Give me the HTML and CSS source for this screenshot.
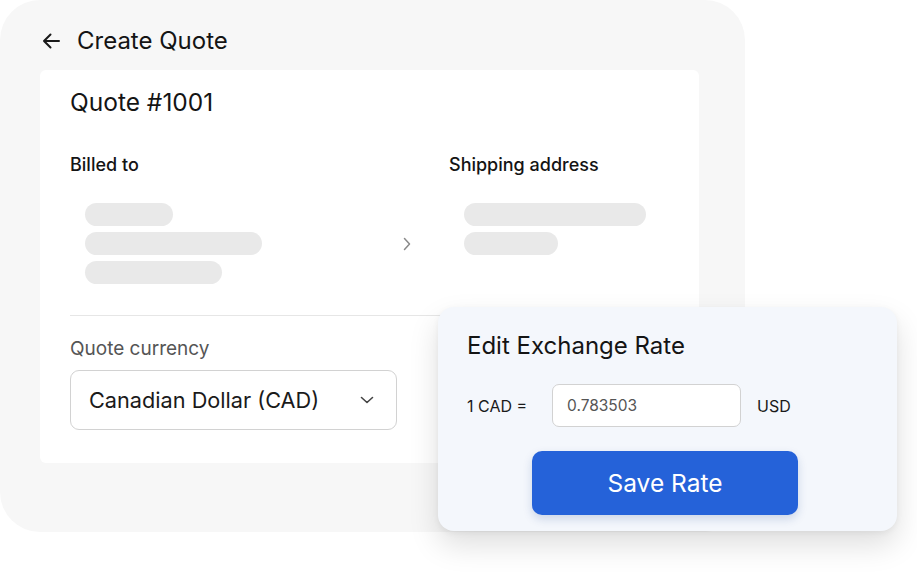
FILE: index.html
```html
<!DOCTYPE html>
<html>
<head>
<meta charset="utf-8">
<link rel="stylesheet" href="styles.css">
</head>
<body>
<div class="stage">
  <div class="panel">
    <div class="header">
      <svg class="back" width="18" height="16" viewBox="0 0 18 16"><path d="M17 8H2M8.5 1.5L2 8l6.5 6.5" fill="none" stroke="#1a1a1a" stroke-width="2" stroke-linecap="round" stroke-linejoin="round"/></svg>
      <span class="title">Create Quote</span>
    </div>
    <div class="card">
      <div class="quote-no">Quote #1001</div>
      <div class="addresses">
        <div class="col col-left">
          <div class="label">Billed to</div>
          <div class="col-body">
            <div class="bars">
              <div class="bar" style="width:88px"></div>
              <div class="bar" style="width:177px"></div>
              <div class="bar" style="width:137px"></div>
            </div>
            <svg class="chev" width="8" height="14" viewBox="0 0 8 14"><path d="M1.5 1.5L6.5 7l-5 5.5" fill="none" stroke="#8a8a8a" stroke-width="1.5" stroke-linecap="round" stroke-linejoin="round"/></svg>
          </div>
        </div>
        <div class="col col-right">
          <div class="label">Shipping address</div>
          <div class="bars">
            <div class="bar" style="width:182px"></div>
            <div class="bar" style="width:94px"></div>
          </div>
        </div>
      </div>
      <div class="divider"></div>
      <div class="cur-label">Quote currency</div>
      <div class="select">
        <span>Canadian Dollar (CAD)</span>
        <svg width="14" height="8" viewBox="0 0 14 8"><path d="M1.5 1.5L7 6.5l5.5-5" fill="none" stroke="#444" stroke-width="1.6" stroke-linecap="round" stroke-linejoin="round"/></svg>
      </div>
    </div>
  </div>
  <div class="popover">
    <div class="pop-title">Edit Exchange Rate</div>
    <div class="rate-row">
      <span class="rate-label">1 CAD =</span>
      <div class="rate-input">0.783503</div>
      <span class="rate-unit">USD</span>
    </div>
    <div class="btn">Save Rate</div>
  </div>
</div>
</body>
</html>
```
FILE: styles.css
```css
* { box-sizing: border-box; }
html, body { margin: 0; padding: 0; background: #ffffff; }
body {
  font-family: Inter, "Noto Sans", sans-serif;
  color: #141414;
  width: 917px;
  height: 572px;
  overflow: hidden;
}
.stage { position: relative; width: 917px; height: 572px; }
.panel {
  width: 745px;
  height: 532px;
  background: #f7f7f7;
  border-radius: 40px;
  padding: 24px 46px 0 40px;
}
.header {
  display: flex;
  align-items: center;
  height: 34px;
}
.back { margin-left: 2px; margin-right: 17px; }
.title { font-size: 24px; line-height: 34px; font-weight: 400; }
.card {
  margin-top: 12px;
  background: #ffffff;
  border-radius: 6px;
  padding: 17px 30px 33px 30px;
}
.quote-no { font-size: 24.5px; line-height: 30px; }
.addresses { display: flex; margin-top: 37px; }
.col-left { width: 379px; }
.col-right { flex: 1; }
.label { font-size: 18px; line-height: 22px; font-weight: 500; }
.col-body { display: flex; align-items: center; justify-content: space-between; padding-right: 38px; }
.bars { display: flex; flex-direction: column; gap: 6px; margin-top: 27px; padding-left: 15px; }
.bar { height: 23px; border-radius: 12px; background: #e9e9e9; }
.chev { margin-top: 27px; }
.divider { height: 1px; background: #e6e6e6; margin-top: 31px; }
.cur-label { margin-top: 21px; font-size: 19px; line-height: 24px; color: #555555; }
.select {
  margin-top: 9px;
  width: 327px;
  height: 60px;
  border: 1px solid #d2d2d2;
  border-radius: 9px;
  display: flex;
  align-items: center;
  justify-content: space-between;
  padding: 0 22px 0 18px;
  font-size: 21.7px;
  color: #1a1a1a;
}
.popover {
  position: absolute;
  left: 438px;
  top: 307px;
  width: 459px;
  height: 224px;
  background: #f4f7fc;
  border-radius: 16px;
  box-shadow: 0 14px 30px rgba(0, 0, 0, 0.13), 0 2px 6px rgba(0, 0, 0, 0.05);
  padding: 24px 29px 15px 29px;
}
.pop-title { font-size: 24px; line-height: 30px; }
.rate-row { display: flex; align-items: center; margin-top: 23px; height: 43px; }
.rate-label { font-size: 16px; width: 85px; color: #1a1a1a; }
.rate-input {
  width: 189px;
  height: 43px;
  background: #ffffff;
  border: 1px solid #d2d2d2;
  border-radius: 7px;
  display: flex;
  align-items: center;
  padding-left: 14px;
  font-size: 15.5px;
  color: #555555;
}
.rate-unit { margin-left: 16px; font-size: 16px; color: #1a1a1a; }
.btn {
  margin-top: 24px;
  margin-left: 65px;
  width: 266px;
  height: 64px;
  background: #2562d9;
  border-radius: 10px;
  color: #ffffff;
  font-size: 24.5px;
  display: flex;
  align-items: center;
  justify-content: center;
  box-shadow: 0 4px 10px rgba(20, 60, 140, 0.18);
}
```
